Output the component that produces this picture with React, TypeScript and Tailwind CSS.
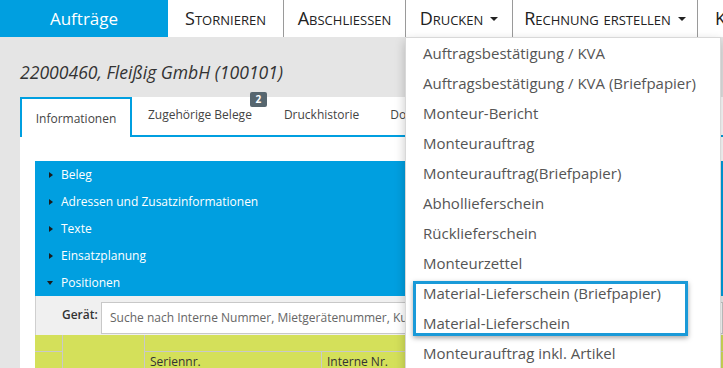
const navItems = [
  { label: 'Stornieren', w: 'w-[116px]' },
  { label: 'Abschliessen', w: 'w-[122px]' },
  { label: 'Drucken', w: 'w-[107px]', caret: true },
  { label: 'Rechnung erstellen', w: 'w-[185px]', caret: true },
]

const sections = ['Beleg', 'Adressen und Zusatzinformationen', 'Texte', 'Einsatzplanung']

const printItems = [
  'Auftragsbestätigung / KVA',
  'Auftragsbestätigung / KVA (Briefpapier)',
  'Monteur-Bericht',
  'Monteurauftrag',
  'Monteurauftrag(Briefpapier)',
  'Abhollieferschein',
  'Rücklieferschein',
  'Monteurzettel',
]

function Caret() {
  return <span className="ml-[7px] inline-block border-x-[4px] border-t-[4px] border-x-transparent border-t-[#222] align-middle" />
}

function MenuItem({ label }: { label: string }) {
  return <div className="flex h-[30px] items-center pl-[17px] text-[15px] whitespace-nowrap text-[#555]">{label}</div>
}

export default function App() {
  return (
    <div className="relative h-[368px] w-[723px] overflow-hidden bg-[#e5e5e5] font-['Open_Sans',sans-serif]">
      {/* top bar */}
      <header className="flex h-[37px] bg-white">
        <div className="flex w-[168px] shrink-0 items-center justify-center bg-[#009fe0] text-[17px] text-white">Aufträge</div>
        {navItems.map((item) => (
          <div
            key={item.label}
            className={`${item.w} flex shrink-0 items-center justify-center border-r border-[#9a9a9a] text-[18px] text-[#222] [font-variant:small-caps]`}
          >
            {item.label}
            {item.caret && <Caret />}
          </div>
        ))}
        <div className="flex shrink-0 items-center pl-[17px] text-[18px] text-[#222] [font-variant:small-caps]">Kopieren</div>
      </header>

      <h1 className="pl-[20px] pt-[23px] text-[17.6px] leading-[24px] text-[#333] italic">22000460, Fleißig GmbH (100101)</h1>

      {/* panel */}
      <div className="ml-[20px] mt-[13px] bg-white">
        <div className="flex h-[40px] items-stretch">
          <div className="flex w-[112px] items-center justify-center border-x-2 border-t-2 border-[#009fe0] pt-[2px] text-[12px] text-[#444]">
            Informationen
          </div>
          <div className="flex flex-1 items-end border-b-2 border-[#009fe0] pb-[11px] text-[12px] whitespace-nowrap text-[#444]">
            <span className="relative ml-[16px]">
              Zugehörige Belege
              <span className="absolute -top-[14px] -right-[15px] flex h-[15px] w-[17px] items-center justify-center rounded-[2px] bg-[#56666f] text-[10px] font-bold text-white">
                2
              </span>
            </span>
            <span className="ml-[32px]">Druckhistorie</span>
            <span className="ml-[31px]">Dokumente</span>
          </div>
        </div>

        <div className="pl-[15px] pt-[24px]">
          <div className="bg-[#009fe0]">
            {sections.map((s) => (
              <div key={s} className="flex h-[27px] items-center pl-[14px] text-[12px] text-white">
                <span className="mr-[8px] inline-block border-y-[3.5px] border-l-[4px] border-y-transparent border-l-[#1a1a1a]" />
                {s}
              </div>
            ))}
            <div className="flex h-[27px] items-center pl-[12px] text-[12px] text-white">
              <span className="mr-[8px] inline-block border-x-[3.5px] border-t-[4px] border-x-transparent border-t-[#1a1a1a]" />
              Positionen
            </div>
          </div>

          <div className="flex h-[39px] items-start border-l border-[#cfcfcf] bg-[#f0f0f0] pt-[6px]">
            <span className="w-[65px] pl-[26px] pt-[4px] text-[12px] font-semibold text-[#333]">Gerät:</span>
            <div className="flex h-[32px] flex-1 items-center border border-[#c8c8c8] bg-white pl-[8px] text-[12px] whitespace-nowrap text-[#666]">
              Suche nach Interne Nummer, Mietgerätenummer, Kundennummer
            </div>
          </div>

          <div className="grid grid-cols-[28px_82px_177px_1fr] grid-rows-[17px_20px] bg-[#d4e05a] text-[12px] text-[#333]">
            <div className="border-r border-b border-[#c9c9c9]" />
            <div className="row-span-2 border-r border-[#c9c9c9]" />
            <div className="col-span-2 border-b border-[#c9c9c9]" />
            <div className="border-r border-[#c9c9c9]" />
            <div className="border-r border-[#c9c9c9] pl-[5px] pt-[1px]">Seriennr.</div>
            <div className="pl-[5px] pt-[1px]">Interne Nr.</div>
          </div>
        </div>
      </div>

      {/* print dropdown */}
      <div className="absolute top-[37px] left-[405px] w-[316px] border border-[#d8d8d8] bg-white pb-[10px] shadow-[0_4px_10px_rgba(0,0,0,0.22)]">
        {printItems.map((p) => (
          <MenuItem key={p} label={p} />
        ))}
        <div className="relative">
          <MenuItem label="Material-Lieferschein (Briefpapier)" />
          <MenuItem label="Material-Lieferschein" />
          <div className="absolute top-[3px] bottom-[2px] left-[7px] w-[275px] border-[3px] border-[#1a9ad8] shadow-[0_2px_5px_rgba(0,0,0,0.35)]" />
        </div>
        <MenuItem label="Monteurauftrag inkl. Artikel" />
      </div>
    </div>
  )
}
